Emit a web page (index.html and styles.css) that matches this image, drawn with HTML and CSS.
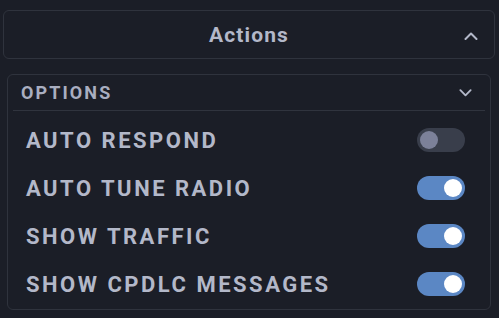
FILE: index.html
```html
<!DOCTYPE html>
<html>
<head>
<meta charset="utf-8">
<link rel="stylesheet" href="styles.css">
</head>
<body>
<div class="page">
  <div class="card actions">
    <span class="actions-title">Actions</span>
    <svg class="chev chev-up" viewBox="0 0 14 8" width="14" height="8"><polyline points="1.5,7 7,1.5 12.5,7" fill="none" stroke="#b3b8c9" stroke-width="2" stroke-linecap="round" stroke-linejoin="round"/></svg>
  </div>
  <div class="card options">
    <div class="options-head">
      <span class="options-title">OPTIONS</span>
      <svg class="chev" viewBox="0 0 14 8" width="13" height="8"><polyline points="1.5,1 7,6.5 12.5,1" fill="none" stroke="#b3b8c9" stroke-width="2" stroke-linecap="round" stroke-linejoin="round"/></svg>
    </div>
    <div class="rows">
      <div class="row"><span class="label">AUTO RESPOND</span><span class="toggle"><span class="knob"></span></span></div>
      <div class="row"><span class="label">AUTO TUNE RADIO</span><span class="toggle on"><span class="knob"></span></span></div>
      <div class="row"><span class="label">SHOW TRAFFIC</span><span class="toggle on"><span class="knob"></span></span></div>
      <div class="row"><span class="label">SHOW CPDLC MESSAGES</span><span class="toggle on"><span class="knob"></span></span></div>
    </div>
  </div>
</div>
</body>
</html>
```
FILE: styles.css
```css
html, body {
  margin: 0;
  padding: 0;
  background: #1b1e27;
  font-family: Roboto, "Liberation Sans", sans-serif;
  color: #b3b8c9;
}
.page {
  padding: 10px 4px 0 3px;
}
.card {
  border: 1px solid #2f333d;
  border-radius: 6px;
  box-sizing: border-box;
}
.actions {
  height: 49px;
  display: flex;
  align-items: center;
  justify-content: center;
  position: relative;
}
.actions-title {
  font-size: 21px;
  font-weight: 700;
  letter-spacing: 1.1px;
}
.chev-up {
  position: absolute;
  right: 16px;
  top: 21px;
}
.options {
  margin: 15px 4px 0 4px;
  height: 236px;
  display: flex;
  flex-direction: column;
}
.options-head {
  flex: none;
  height: 35px;
  margin: 0 5px;
  border-bottom: 1px solid #30343e;
  display: flex;
  align-items: center;
  justify-content: space-between;
  padding: 0 13px 0 8px;
  box-sizing: content-box;
}
.options-title {
  font-size: 18px;
  font-weight: 700;
  letter-spacing: 2.1px;
  color: #a9aec0;
}
.rows {
  padding-top: 5px;
  display: flex;
  flex-direction: column;
}
.row {
  flex: none;
  height: 48px;
  display: flex;
  align-items: center;
  justify-content: space-between;
  padding: 0 25px 0 18px;
}
.label {
  font-size: 22px;
  font-weight: 700;
  letter-spacing: 2.5px;
}
.toggle {
  width: 48px;
  height: 24px;
  border-radius: 12px;
  background: #393e4b;
  display: flex;
  align-items: center;
  padding: 0 3px;
  box-sizing: border-box;
}
.knob {
  width: 18px;
  height: 18px;
  border-radius: 50%;
  background: #7c8199;
}
.toggle.on {
  background: #5b87c4;
  justify-content: flex-end;
}
.toggle.on .knob {
  background: #ffffff;
}
```
